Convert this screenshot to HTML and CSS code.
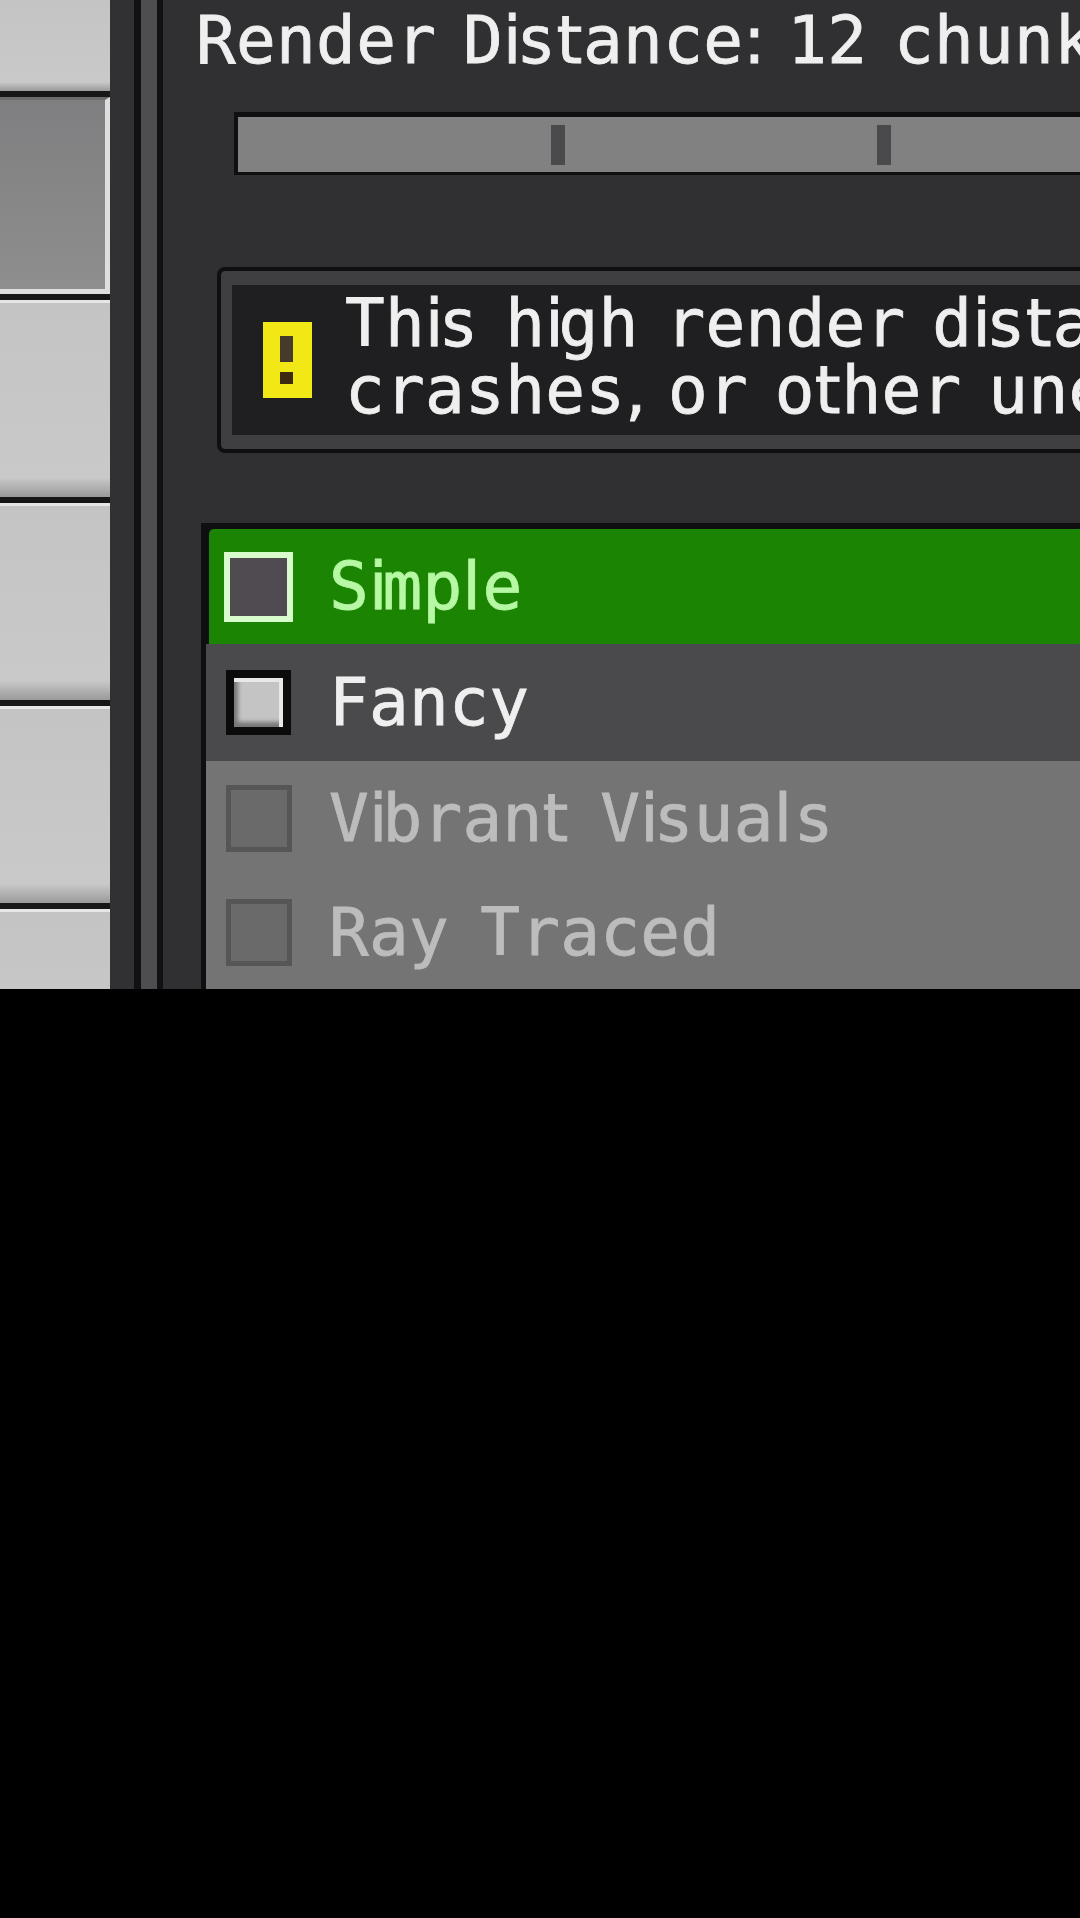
FILE: index.html
```html
<!DOCTYPE html>
<html lang="en">
<head>
<meta charset="utf-8">
<title>Video settings</title>
<link rel="stylesheet" href="styles.css">
</head>
<body>
<main class="screen">
  <nav class="sidebar">
    <div class="tab tab-first"></div>
    <div class="tab tab-active"></div>
    <div class="tab"></div>
    <div class="tab"></div>
    <div class="tab"></div>
    <div class="tab tab-last"></div>
  </nav>
  <div class="divider"></div>
  <section class="panel">
    <h1 class="txt title">Render D<span class="i">i</span>s<span class="t">t</span>ance<span class="i">:</span> 12 chun<span class="k">k</span>s</h1>
    <div class="slider">
      <span class="tick"></span><span class="tick"></span><span class="tick"></span>
    </div>
    <div class="warn">
      <div class="warn-inner">
        <svg class="warn-icon" viewBox="0 0 49 76" aria-hidden="true">
          <rect width="49" height="76" fill="#f1e815"/>
          <rect x="17" y="14" width="13" height="26" fill="#453a2c"/>
          <rect x="17" y="50" width="13" height="12" fill="#3d2a10"/>
        </svg>
        <p class="txt warn-text">
          <span class="line">Th<span class="i">i</span>s h<span class="i">i</span>gh render d<span class="i">i</span>s<span class="t">t</span>ance</span>
          <span class="line">crashes<span class="i">,</span> or o<span class="t">t</span>her unexpec<span class="t">t</span>ed</span>
        </p>
      </div>
    </div>
    <div class="list">
      <div class="row row-green">
        <span class="radiobox"><span class="radio radio-hover"></span></span>
        <span class="txt label label-green">S<span class="i">i</span>mp<span class="l">l</span>e</span>
      </div>
      <div class="row row-dark">
        <span class="radiobox"><span class="radio radio-on"></span></span>
        <span class="txt label">Fancy</span>
      </div>
      <div class="row row-off">
        <span class="radiobox"><span class="radio radio-off"></span></span>
        <span class="txt label label-off">V<span class="i">i</span>bran<span class="t">t</span> V<span class="i">i</span>sua<span class="l">l</span>s</span>
      </div>
      <div class="row row-off">
        <span class="radiobox"><span class="radio radio-off"></span></span>
        <span class="txt label label-off">Ray Traced</span>
      </div>
    </div>
  </section>
</main>
</body>
</html>
```
FILE: styles.css
```css
* { box-sizing: border-box; }
html, body { margin: 0; padding: 0; }
body {
  width: 1080px;
  height: 1918px;
  background: #000;
  overflow: hidden;
}
.screen {
  display: flex;
  width: 1080px;
  height: 989px;
  overflow: hidden;
  background: #303032;
  filter: blur(0.5px);
}

/* left tab column */
.sidebar {
  flex: 0 0 134px;
  padding-right: 24px;
  display: flex;
  flex-direction: column;
  gap: 6px;
  background: #313133;
}
.tab {
  flex: 0 0 197px;
  background: linear-gradient(#c4c4c4, #c9c9c9 90%, #9a9a9a);
  border-top: 3px solid #e6e6e6;
  box-shadow: 0 6px 0 #171717;
}
.tab-first { flex-basis: 91px; border-top: 0; }
.tab-active {
  background: linear-gradient(#7f7f81, #8e8e8e);
  border-top: 3px solid #6c6c6c;
  border-right: 5px solid #dedede;
  border-bottom: 5px solid #dedede;
}
.tab-last { box-shadow: none; }

.divider {
  flex: 0 0 29px;
  background: #4e4e50;
  border-left: 7px solid #111113;
  border-right: 6px solid #111113;
}

.panel {
  flex: 1 1 0;
  min-width: 0;
  overflow: hidden;
  white-space: nowrap;
}

/* pixel-grid text: 6.67px per font unit */
.txt {
  font-family: "DejaVu Sans Mono", monospace;
  font-size: 66px;
  font-weight: 400;
  letter-spacing: 0.3px;
  word-spacing: -13.3px;
  color: #efefef;
  -webkit-text-stroke: 0.8px currentColor;
}
.i { font-family: "DejaVu Sans", sans-serif; letter-spacing: -5px; }
.l { font-family: "DejaVu Sans", sans-serif; letter-spacing: 1.7px; }
.t { font-family: "DejaVu Sans", sans-serif; letter-spacing: 0.8px; }
.k { letter-spacing: -6.3px; }

.title {
  margin: 0;
  height: 80px;
  line-height: 82px;
  padding-left: 33px;
}

.slider {
  display: flex;
  gap: 312px;
  align-items: center;
  width: 1200px;
  height: 63px;
  margin: 32px 0 0 71px;
  padding-left: 313px;
  background: #818182;
  border-top: 5px solid #0f0f11;
  border-bottom: 3px solid #0f0f11;
  border-left: 4px solid #0f0f11;
}
.tick {
  flex: 0 0 14px;
  height: 40px;
  background: #4a4a4c;
}

.warn {
  width: 1200px;
  height: 186px;
  margin: 92px 0 0 54px;
  border: 4px solid #0f0f11;
  border-radius: 8px;
}
.warn-inner {
  display: flex;
  align-items: center;
  gap: 33px;
  height: 100%;
  padding-left: 31px;
  background: #1f1f21;
  border: 14px solid #3f3f41;
  border-left-width: 11px;
  border-radius: 5px;
}
.warn-icon { flex: 0 0 49px; height: 76px; }
.warn-text { margin: -6px 0 0; line-height: 67px; }
.line { display: block; }

.list {
  width: 1200px;
  height: 466px;
  margin: 70px 0 0 38px;
  border-top: 6px solid #0f0f11;
  border-left: 5px solid #0f0f11;
  background: #0f0f11;
}
.row {
  display: flex;
  align-items: center;
  gap: 36px;
  padding-left: 18px;
}
.row-green {
  height: 115px;
  margin-left: 3px;
  padding-left: 15px;
  background: #1b8503;
  border-top-left-radius: 5px;
}
.row-dark { height: 117px; background: #4a494c; }
.row-off { height: 114px; background: #747475; }
.label { word-spacing: -9px; }

.radiobox {
  flex: 0 0 69px;
  display: flex;
  justify-content: center;
}
.radio { display: block; }
.radio-hover {
  width: 69px;
  height: 70px;
  background: #4f4b50;
  border: 6px solid #d9fccd;
}
.radio-on {
  width: 65px;
  height: 65px;
  background: #c4c4c4;
  border: 8px solid #0b0b0b;
  box-shadow: inset -4px 4px 0 #e8e8e8, inset 4px -5px 4px #777;
}
.radio-off {
  width: 66px;
  height: 67px;
  background: #6a6a6b;
  border: 5px solid #565657;
}
.label-green { color: #b6f8a4; }
.label-off { color: #bcbcbc; }
```
